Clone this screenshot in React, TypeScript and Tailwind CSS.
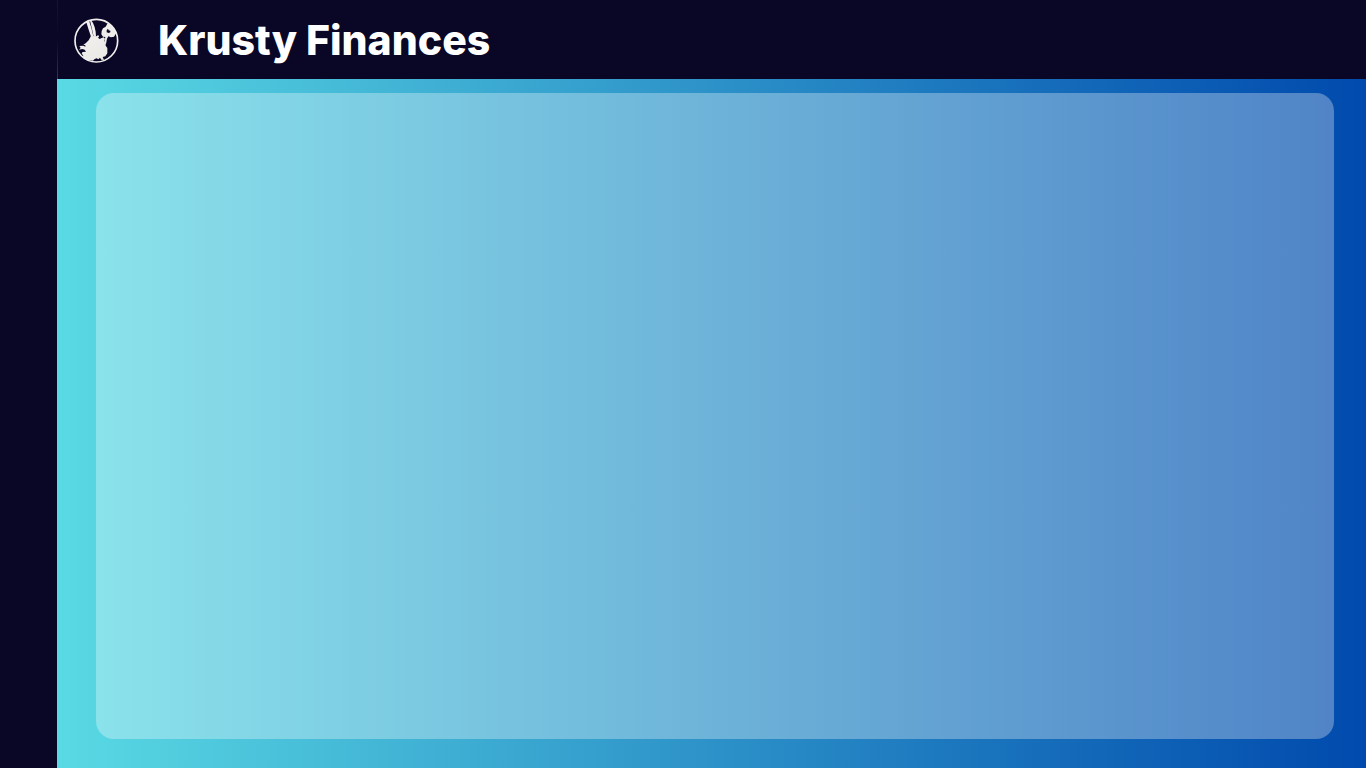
function KrustyLogo() {
  return (
    <svg viewBox="0 0 180 180" className="size-15 shrink-0" role="img" aria-label="Krusty Finances logo">
      <defs>
        <clipPath id="logo-disc">
          <circle cx="91" cy="92" r="65" />
        </clipPath>
        <linearGradient id="logo-fill" gradientUnits="userSpaceOnUse" x1="40" y1="40" x2="140" y2="150">
          <stop offset="0" stopColor="#f4f3f1" />
          <stop offset="1" stopColor="#e9e7e4" />
        </linearGradient>
      </defs>
      <g clipPath="url(#logo-disc)" fill="url(#logo-fill)">
        <path d="M60 34 L69 32 L76 53 L82 79 L75 80 L69 62 Z" />
        <path d="M72 32 Q78 31 81 39 Q87 51 89 65 L90 80 L83 80 L78 57 Z" />
        <path d="M75 78 L91 79 L97 75 L99 80 L96 83 L101 87 L107 84 L113 82 L117 86 L115 93 L119 99 L119 107 L124 114 L124 130 L118 139 L110 141 L114 150 L106 149 L102 143 L97 148 L92 145 L86 147 L81 152 L70 151 L60 152 L48 146 L52 138 L47 130 L50 126 L60 125 L56 119 L49 117 L39 119 L44 114 L40 108 L52 107 L58 110 L58 106 L52 104 L60 99 L68 91 Z" />
        <path d="M111 55 L119 50 L124 41 L131 42 L149 56 L152 67 L144 80 L135 82 L127 79 L123 86 L120 102 L115 99 L118 81 L111 80 L106 73 L107 63 Z" />
      </g>
      <path d="M122 61 L126 56 L128 61 L133 62 L133 67 L128 69 L122 67 Z" fill="#0a0626" />
      <circle cx="91" cy="92" r="64" fill="none" stroke="#f0efed" strokeWidth="5" />
    </svg>
  );
}

export default function App() {
  return (
    <div className="flex min-h-screen bg-linear-to-r/srgb from-[#5de0e6] to-[#004aad] font-['Inter',sans-serif]">
      <aside className="w-[57px] shrink-0 bg-[#0a0626]" aria-label="Sidebar" />
      <div className="flex min-w-0 flex-1 flex-col">
        <header className="flex h-[79px] shrink-0 bg-[#0a0626]">
          <div className="w-px bg-linear-to-b from-[#17132f] via-[#0a0626] to-[#263c55]" />
          <div className="flex items-center gap-8 px-2">
            <KrustyLogo />
            <h1 className="text-[41px] leading-[50px] font-extrabold whitespace-nowrap text-white">Krusty Finances</h1>
          </div>
        </header>
        <main className="flex flex-1 pt-[14px] pr-8 pb-[29px] pl-[39px]">
          <section className="flex-1 rounded-[18px] bg-white/31" aria-label="Content" />
        </main>
      </div>
    </div>
  );
}
